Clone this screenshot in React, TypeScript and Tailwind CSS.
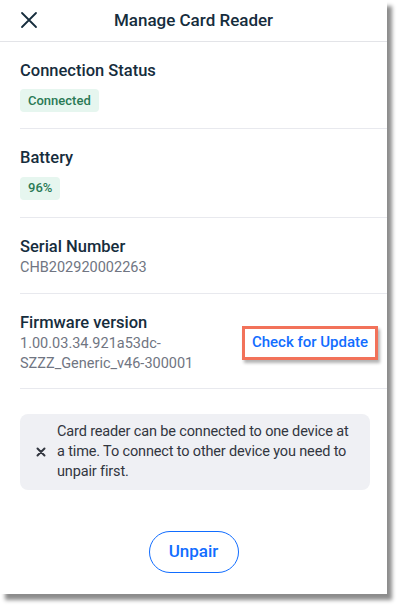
import { FC } from "react";

const font = { fontFamily: "Roboto, 'Noto Sans', sans-serif" };

const Badge: FC<{ label: string }> = ({ label }) => (
  <span className="inline-flex h-[23px] items-center rounded-[4px] bg-[#e6f6ef] px-[8px] text-[13px] font-medium text-[#2a7a55]">
    {label}
  </span>
);

const Divider = () => <div className="ml-5 h-px shrink-0 bg-[#e8e9ee]" />;

export default function App() {
  return (
    <div className="h-[610px] w-[403px] bg-white" style={font}>
      <div className="flex h-[594px] w-[387px] flex-col bg-white shadow-[5px_6px_4px_rgba(0,0,0,0.45)]">
        <div className="relative flex h-[42px] shrink-0 items-center justify-center border-b border-[#e3e4e8]">
          <svg
            className="absolute left-[20px] top-[11px]"
            width="18"
            height="18"
            viewBox="0 0 18 18"
            fill="none"
            stroke="#162d3d"
            strokeWidth="1.8"
            strokeLinecap="round"
          >
            <path d="M2 2l14 14M16 2L2 16" />
          </svg>
          <h1 className="text-[17px] font-medium text-[#162d3d]">Manage Card Reader</h1>
        </div>

        <div className="flex flex-col gap-[7px] px-5 pb-[16px] pt-[19px]">
          <h2 className="text-[16.5px] font-medium leading-5 text-[#162d3d]">Connection Status</h2>
          <div>
            <Badge label="Connected" />
          </div>
        </div>
        <Divider />

        <div className="flex flex-col gap-[7px] px-5 pb-[17px] pt-[19px]">
          <h2 className="text-[16.5px] font-medium leading-5 text-[#162d3d]">Battery</h2>
          <div>
            <Badge label="96%" />
          </div>
        </div>
        <Divider />

        <div className="flex flex-col px-5 pb-[15px] pt-[18px]">
          <h2 className="text-[16.5px] font-medium leading-[22px] text-[#162d3d]">Serial Number</h2>
          <p className="text-[14.5px] leading-5 text-[#707582]">CHB202920002263</p>
        </div>
        <Divider />

        <div className="flex items-start justify-between pb-[14px] pl-5 pr-[9px] pt-[18px]">
          <div className="flex flex-col">
            <h2 className="text-[16.5px] font-medium leading-[22px] text-[#162d3d]">Firmware version</h2>
            <p className="text-[14.5px] leading-5 text-[#707582]">
              1.00.03.34.921a53dc-
              <br />
              SZZZ_Generic_v46-300001
            </p>
          </div>
          <div className="mt-[14px] flex h-[34px] w-[136px] items-center justify-center border-[3px] border-[#f2725a] shadow-[2px_3px_3px_rgba(0,0,0,0.3)]">
            <span className="text-[15px] font-medium text-[#116dff]">Check for Update</span>
          </div>
        </div>
        <Divider />

        <div className="ml-5 mr-[17px] mt-[25px] flex items-center gap-[11px] rounded-[8px] bg-[#eff0f4] py-[8px] pl-[16px] pr-[14px]">
          <svg
            className="shrink-0"
            width="10"
            height="10"
            viewBox="0 0 10 10"
            stroke="#32363f"
            strokeWidth="2"
            strokeLinecap="round"
          >
            <path d="M1.5 1.5l7 7M8.5 1.5l-7 7" />
          </svg>
          <p className="text-[14.5px] leading-5 tracking-[-0.15px] text-[#32363f]">
            Card reader can be connected to one device at a time. To connect to other device you need to unpair first.
          </p>
        </div>

        <div className="mt-[41px] flex justify-center">
          <button className="flex h-[42px] w-[90px] items-center justify-center rounded-full border border-[#116dff] text-[17px] font-medium text-[#116dff]">
            Unpair
          </button>
        </div>
      </div>
    </div>
  );
}
